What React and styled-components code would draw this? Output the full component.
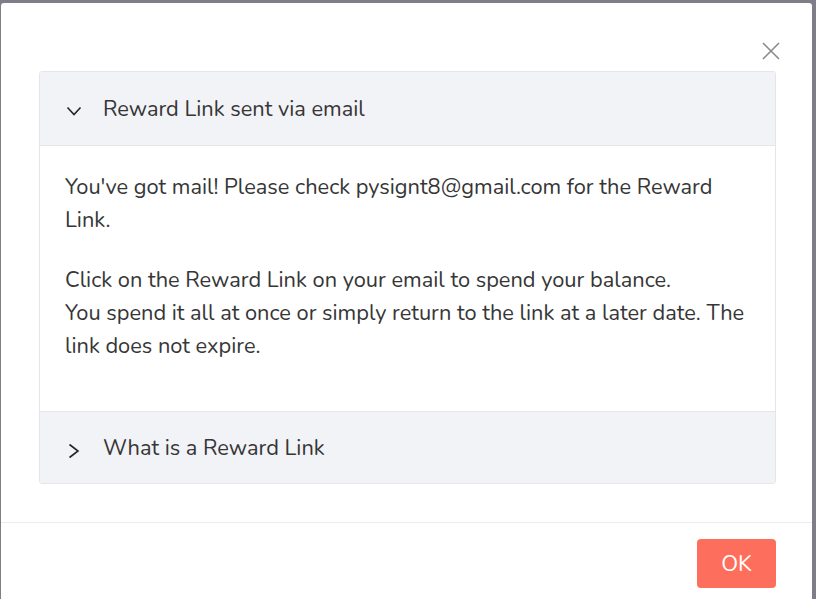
import React, { useState } from "react";
import styled, { createGlobalStyle } from "styled-components";

const GlobalStyle = createGlobalStyle`
  html, body {
    margin: 0;
    padding: 0;
    background: #7f7d87;
    overflow: hidden;
  }
  body {
    font-family: "Nunito", Lato, "Noto Sans", sans-serif;
  }
`;

const sections = [
  {
    title: "Reward Link sent via email",
    body: (
      <>
        <p>
          You've got mail! Please check pysignt8@gmail.com for the Reward
          Link.
        </p>
        <p>
          Click on the Reward Link on your email to spend your balance.
          <br />
          You spend it all at once or simply return to the link at a later
          date. The link does not expire.
        </p>
      </>
    ),
  },
  {
    title: "What is a Reward Link",
    body: null,
  },
];

function ChevronIcon({ open }) {
  return open ? (
    <svg width="16" height="10" viewBox="0 0 16 10">
      <path d="M1.5 1.5 L8 8.5 L14.5 1.5" stroke="#262626" strokeWidth="1.6" fill="none" />
    </svg>
  ) : (
    <svg width="12" height="16" viewBox="0 0 12 16">
      <path d="M1.5 1.5 L10 8 L1.5 14.5" stroke="#262626" strokeWidth="1.6" fill="none" />
    </svg>
  );
}

function App() {
  const [open, setOpen] = useState(0);

  return (
    <>
      <GlobalStyle />
      <Backdrop>
        <Modal>
          <TopBar>
            <Close aria-label="close">
              <svg width="18" height="18" viewBox="0 0 18 18">
                <path
                  d="M1 1 L17 17 M17 1 L1 17"
                  stroke="#8a8a8a"
                  strokeWidth="1.6"
                  fill="none"
                />
              </svg>
            </Close>
          </TopBar>
          <Content>
            <Accordion>
              {sections.map((s, i) => (
                <Item key={s.title}>
                  <Header
                    $first={i === 0}
                    $open={open === i}
                    onClick={() => setOpen(open === i ? -1 : i)}
                  >
                    <Chevron $open={open === i}>
                      <ChevronIcon open={open === i} />
                    </Chevron>
                    <Title>{s.title}</Title>
                  </Header>
                  {open === i && s.body && <Body>{s.body}</Body>}
                </Item>
              ))}
            </Accordion>
          </Content>
          <Footer>
            <OkButton>OK</OkButton>
          </Footer>
        </Modal>
      </Backdrop>
    </>
  );
}

export default App;

const Backdrop = styled.div`
  height: 599px;
  padding: 3px 4px 0 1px;
  box-sizing: border-box;
`;

const Modal = styled.div`
  background: #ffffff;
  border-radius: 3px 3px 0 0;
  height: 100%;
  display: flex;
  flex-direction: column;
`;

const TopBar = styled.div`
  display: flex;
  justify-content: flex-end;
  padding: 39px 32px 0 0;
  height: 29px;
`;

const Close = styled.button`
  border: none;
  background: none;
  padding: 0;
  width: 18px;
  height: 18px;
  cursor: pointer;
  display: flex;
`;

const Content = styled.div`
  padding: 0 36px 0 38px;
`;

const Accordion = styled.div`
  border: 1px solid #e6e6ea;
  border-radius: 3px;
  overflow: hidden;
`;

const Item = styled.div``;

const Header = styled.div`
  display: flex;
  align-items: center;
  background: #f2f3f7;
  height: ${(p) => (p.$first ? "73px" : "71px")};
  border-top: ${(p) => (p.$first ? "none" : "1px solid #e6e6ea")};
  border-bottom: ${(p) => (p.$open ? "1px solid #e6e6ea" : "none")};
  box-sizing: content-box;
  cursor: pointer;
`;

const Chevron = styled.span`
  display: flex;
  justify-content: center;
  width: 16px;
  margin: ${(p) => (p.$open ? "5px 21px 0 26px" : "6px 21px 0 26px")};
`;

const Title = styled.span`
  font-size: 21.8px;
  color: #363636;
`;

const Body = styled.div`
  padding: 25px 23px 24px 25px;
  height: 216px;
  font-size: 21.8px;
  line-height: 33px;
  color: #363636;

  p {
    margin: 0 0 27px 0;
  }
`;

const Footer = styled.div`
  margin-top: 38px;
  border-top: 1px solid #ececec;
  display: flex;
  justify-content: flex-end;
  padding: 16px 36px 0 0;
`;

const OkButton = styled.button`
  width: 79px;
  height: 49px;
  border: none;
  border-radius: 4px;
  background: #fd6f5c;
  color: #ffffff;
  font-family: "Nunito", Lato, "Noto Sans", sans-serif;
  font-size: 22px;
  cursor: pointer;
`;
